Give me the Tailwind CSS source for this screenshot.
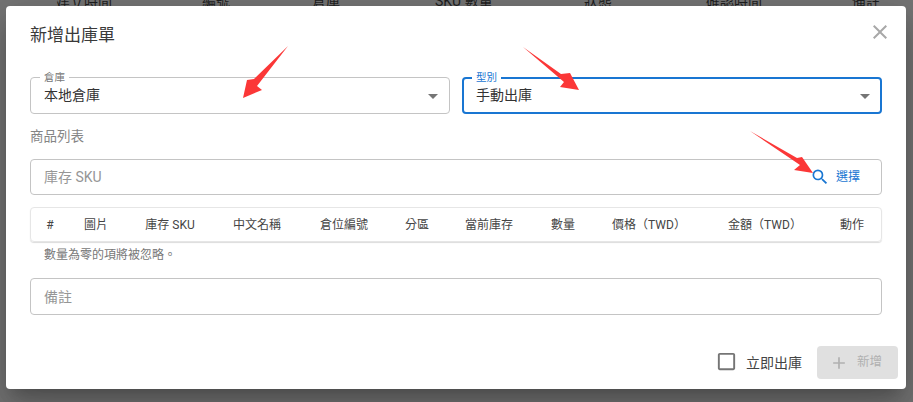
<!DOCTYPE html>
<html lang="zh-Hant">
<head>
    <meta charset="UTF-8">
    <meta name="viewport" content="width=device-width, initial-scale=1.0">
    <title>新增出庫單</title>
    <script src="https://cdn.jsdelivr.net/npm/@tailwindcss/browser@4"></script>
</head>
<body class="bg-[#757575] overflow-hidden font-['Roboto','Noto_Sans_CJK_TC',sans-serif] text-[#333]">
    <div class="relative w-[913px] h-[402px] overflow-hidden">
        <!-- Table header behind the dialog -->
        <div class="relative h-[6px] overflow-hidden text-sm text-[#1f1f1f]">
            <div class="flex -mt-[9px] pl-[56px] leading-5">
                <span class="w-[146px]">建立時間</span>
                <span class="w-[110px]">編號</span>
                <span class="w-[123px]">倉庫</span>
                <span class="w-[149px]">SKU 數量</span>
                <span class="w-[122px]">狀態</span>
                <span class="w-[146px]">確認時間</span>
                <span>備註</span>
            </div>
        </div>

        <!-- Dialog -->
        <div class="absolute left-[6px] top-[6px] w-[900px] h-[383px] bg-white rounded-[4px] shadow-[0_11px_15px_-7px_rgba(0,0,0,0.2),0_24px_38px_3px_rgba(0,0,0,0.14),0_9px_46px_8px_rgba(0,0,0,0.12)] px-6 flex flex-col">
            <div class="flex items-center justify-between h-[58px]">
                <h2 class="text-[17px] leading-6 text-[#3a3a3a] -mt-[1px]">新增出庫單</h2>
                <svg class="w-6 h-6 -mr-[10px] -mt-[6px] text-[#a8a8a8]" viewBox="0 0 24 24" fill="currentColor"><path d="M19 6.41 17.59 5 12 10.59 6.41 5 5 6.41 10.59 12 5 17.59 6.41 19 12 13.41 17.59 19 19 17.59 13.41 12z"/></svg>
            </div>

            <!-- Selects -->
            <div class="grid grid-cols-2 gap-3 mt-[13px]">
                <div class="relative h-[37px] border border-[#c4c4c4] rounded-[4px] flex items-center justify-between pl-[13px] pr-[4px] text-sm">
                    <span class="absolute left-[9px] -top-[6px] bg-white px-[4px] text-[10.5px] leading-3 text-[#777]">倉庫</span>
                    <span class="-mt-[2px]">本地倉庫</span>
                    <svg class="w-6 h-6 text-[#757575]" viewBox="0 0 24 24" fill="currentColor"><path d="M7 10l5 5 5-5z"/></svg>
                </div>
                <div class="relative h-[37px] border-2 border-[#1976d2] rounded-[4px] flex items-center justify-between pl-[12px] pr-[3px] text-sm">
                    <span class="absolute left-[8px] -top-[7px] bg-white px-[4px] text-[10.5px] leading-3 text-[#1976d2]">型別</span>
                    <span class="-mt-[2px]">手動出庫</span>
                    <svg class="w-6 h-6 text-[#757575]" viewBox="0 0 24 24" fill="currentColor"><path d="M7 10l5 5 5-5z"/></svg>
                </div>
            </div>

            <div class="mt-[12px] text-[13.5px] leading-5 text-[#858585]">商品列表</div>

            <!-- SKU input -->
            <div class="mt-[13px] h-[36px] border border-[#c4c4c4] rounded-[4px] flex items-center justify-between pl-[13px] pr-[21px] text-sm text-[#969696]">
                <span>庫存 SKU</span>
                <div class="flex items-center gap-[6px] text-[#1976d2] text-xs">
                    <svg class="w-5 h-5" viewBox="0 0 24 24" fill="currentColor"><path d="M15.5 14h-.79l-.28-.27A6.471 6.471 0 0 0 16 9.5 6.5 6.5 0 1 0 9.5 16c1.61 0 3.09-.59 4.23-1.57l.27.28v.79l5 4.99L20.49 19l-4.99-5zm-6 0C7.01 14 5 11.99 5 9.5S7.01 5 9.5 5 14 7.01 14 9.5 11.99 14 9.5 14z"/></svg>
                    <span>選擇</span>
                </div>
            </div>

            <!-- Table head -->
            <div class="mt-3 h-[35px] border border-[#e6e6e6] rounded-[4px] shadow-[0_1px_1px_rgba(0,0,0,0.14)] grid grid-cols-[38px_54px_94px_80px_94px_52px_92px_56px_116px_116px_58px] items-center text-center text-xs text-[#444]">
                <span>#</span>
                <span>圖片</span>
                <span>庫存 SKU</span>
                <span>中文名稱</span>
                <span>倉位編號</span>
                <span>分區</span>
                <span>當前庫存</span>
                <span>數量</span>
                <span>價格（TWD）</span>
                <span>金額（TWD）</span>
                <span>動作</span>
            </div>
            <p class="mt-[5px] pl-[14px] text-[12px] leading-4 text-[#777]">數量為零的項將被忽略。</p>

            <!-- Remarks -->
            <div class="mt-[15px] h-[37px] border border-[#c4c4c4] rounded-[4px] flex items-center pl-[13px] text-sm text-[#969696]">備註</div>

            <!-- Footer -->
            <div class="mt-[31px] -mr-[16px] flex items-center justify-end">
                <svg class="w-[23px] h-[23px] -mt-[2px] text-[#757575]" viewBox="0 0 24 24" fill="currentColor"><path d="M19 5v14H5V5h14m0-2H5c-1.1 0-2 .9-2 2v14c0 1.1.9 2 2 2h14c1.1 0 2-.9 2-2V5c0-1.1-.9-2-2-2z"/></svg>
                <span class="ml-[8px] text-sm text-[#444]">立即出庫</span>
                <div class="ml-[15px] w-[81px] h-[33px] bg-[#e0e0e0] rounded-[4px] flex items-center pl-[12px] gap-[8px] text-[12.5px] text-[#b0b0b0]">
                    <svg class="w-5 h-5" viewBox="0 0 24 24" fill="currentColor"><path d="M19 13h-6v6h-2v-6H5v-2h6V5h2v6h6v2z"/></svg>
                    <span>新增</span>
                </div>
            </div>
        </div>

        <!-- Red annotation arrows -->
        <svg class="absolute left-0 top-0 pointer-events-none" width="913" height="402" viewBox="0 0 913 402" fill="#fb3737">
            <polygon points="288,46 254,79 247,80 243,98 262,90 257,86"/>
            <polygon points="523,47 561,74 570,73 579,90 560,87 564,82"/>
            <polygon points="750,131 797,158 802,157 813,173 794,170 800,165"/>
        </svg>
    </div>
</body>
</html>
